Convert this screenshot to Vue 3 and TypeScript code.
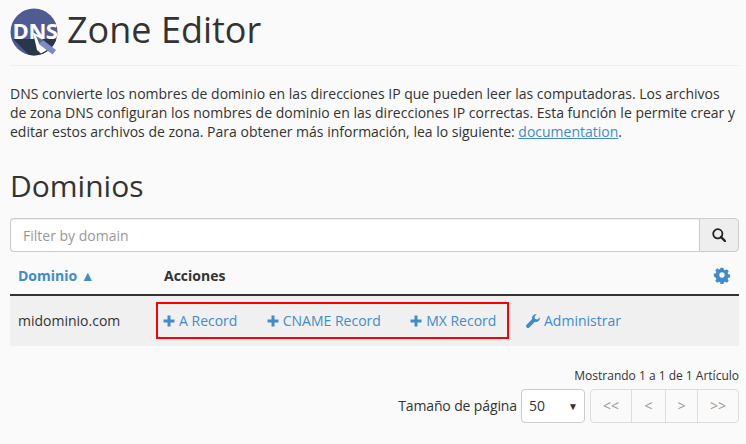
<script setup lang="ts">
const records: string[] = ['A Record', 'CNAME Record', 'MX Record']
const pager: string[] = ['<<', '<', '>', '>>']
</script>

<template>
  <main class="page">
    <header class="head">
      <svg class="logo" width="48" height="48" viewBox="0 0 48 48">
        <defs><clipPath id="c"><circle cx="24" cy="24" r="23.500" /></clipPath></defs>
        <circle cx="24" cy="24" r="23.500" fill="#4f5b93" />
        <g clip-path="url(#c)">
          <path d="M3 31 L46 31 L48 48 L20 48 Z" fill="#28384a" />
        </g>
        <text x="25" y="30.500" text-anchor="middle" class="logo-text">DNS</text>
        <path d="M23 24.500 L33 29.500 L31 36 L37 42 L31 45.500 L27 42 Z" fill="#fff" />
        <path d="M33 32 L46 42 L42.500 46.500 L29.500 36.500 Z" fill="#7f8ac4" />
        <path d="M26 28 L33 32 L29.500 36.500 Z" fill="#5a6a88" />
      </svg>
      <h1 class="title">Zone Editor</h1>
    </header>

    <p class="intro">
      DNS convierte los nombres de dominio en las direcciones IP que pueden leer las computadoras. Los archivos de zona DNS configuran los nombres de dominio en las direcciones IP correctas. Esta función le permite crear y editar estos archivos de zona. Para obtener más información, lea lo siguiente: <a class="doc" href="#">documentation</a>.
    </p>

    <h2 class="section">Dominios</h2>

    <div class="search">
      <input class="search-input" type="text" placeholder="Filter by domain" />
      <button class="search-btn" aria-label="Buscar">
        <svg class="search-icon" width="14" height="14" viewBox="0 0 14 14" fill="none" stroke="#222" stroke-width="1.800">
          <circle cx="5.800" cy="5.800" r="4.600" />
          <path d="M9 9 L13 13" stroke-width="2.400" stroke-linecap="round" />
        </svg>
      </button>
    </div>

    <div class="thead">
      <span class="th-domain">Dominio ▲</span>
      <span class="th-actions">Acciones</span>
      <svg class="gear" width="18" height="18" viewBox="0 0 18 18">
        <path fill="#428bca" fill-rule="evenodd" d="M7.300 0.500h3.400l.5 2.400 1.300.6 2.100-1.300 2.300 2.400-1.300 2 .6 1.400 2.300.5v3.300l-2.300.5-.6 1.400 1.300 2-2.300 2.400-2.100-1.300-1.300.6-.5 2.400H7.300l-.5-2.400-1.300-.6-2.100 1.300-2.300-2.400 1.300-2-.6-1.400L-.5 10.800V7.500l2.300-.5.6-1.400-1.300-2 2.300-2.400 2.100 1.300 1.300-.6z M9 5.900a3.100 3.100 0 1 0 0 6.200a3.100 3.100 0 1 0 0-6.200z" transform="translate(1.300 1.300) scale(.855)" />
      </svg>
    </div>

    <div class="row">
      <span class="domain">midominio.com</span>
      <div class="records">
        <a v-for="r in records" :key="r" class="link" href="#">
          <svg class="plus" width="12" height="12" viewBox="0 0 12 12"><path fill="#428bca" d="M4.500 0.500h3v4h4v3h-4v4h-3v-4h-4v-3h4z" /></svg>{{ r }}
        </a>
      </div>
      <a class="link manage" href="#">
        <svg class="wrench" width="14" height="14" viewBox="0 0 14 14"><path fill="#428bca" d="M13.700 3.200c.3 1.600-.1 3-1.200 3.900-1 .9-2.300 1.100-3.500.7L3.300 13.400c-.7.700-1.800.7-2.500 0l-.2-.2c-.7-.7-.7-1.800 0-2.500l5.600-5.700C5.800 3.800 6 2.400 7 1.400 7.900.4 9.300 0 10.800.3L8.600 2.500l.4 2.500 2.500.4z" /></svg>Administrar
      </a>
    </div>

    <div class="count">Mostrando 1 a 1 de 1 Artículo</div>
    <div class="paging">
      <span class="size-label">Tamaño de página</span>
      <div class="select"><span>50</span><span class="caret">▼</span></div>
      <div class="pager">
        <span v-for="p in pager" :key="p" class="page-btn">{{ p }}</span>
      </div>
    </div>
  </main>
</template>

<style>
html, body { margin: 0; background: #fafafa; }
</style>

<style scoped>
.page {
  box-sizing: border-box;
  width: 746px;
  height: 444px;
  overflow: hidden;
  padding: 0 7px 0 10px;
  font-family: "Open Sans", sans-serif;
  font-size: 14px;
  line-height: 20px;
  color: #333;
}
.head {
  display: flex;
  align-items: center;
  gap: 9px;
  border-bottom: 1px solid #eee;
  padding-bottom: 5px;
  height: 60px;
}
.logo { flex: none; margin-top: 4px; }
.logo-text { font: 700 22px "Open Sans", sans-serif; fill: #fff; letter-spacing: -0.5px; }
.title { margin: 0; font-size: 36px; font-weight: 400; line-height: 50px; }
.intro { margin: 18px 0 0; width: 729px; line-height: 19px; }
.doc { color: #428bca; text-decoration: underline; }
.section { margin: 24px 0 0; font-size: 30px; font-weight: 400; line-height: 42px; }
.search { display: flex; height: 34px; margin-top: 11px; }
.search-input {
  flex: 1;
  min-width: 0;
  box-sizing: border-box;
  height: 34px;
  padding: 6px 12px;
  border: 1px solid #ccc;
  border-right: 0;
  border-radius: 4px 0 0 4px;
  background: #fff;
  font: 14px "Open Sans", sans-serif;
  color: #333;
  box-shadow: inset 0 1px 1px rgba(0,0,0,.075);
  outline: none;
}
.search-input::placeholder { color: #999; opacity: 1; }
.search-btn {
  width: 40px;
  height: 34px;
  padding: 0;
  display: flex;
  align-items: center;
  justify-content: center;
  border: 1px solid #ccc;
  border-radius: 0 4px 4px 0;
  background: #eee;
}
.search-icon { margin-bottom: 1px; }
.thead {
  display: flex;
  align-items: center;
  height: 36px;
  padding-top: 6px;
  border-bottom: 2px solid #333;
  font-weight: 700;
}
.th-domain { box-sizing: border-box; width: 154px; padding-left: 8px; color: #428bca; }
.th-actions { flex: 1; }
.gear { margin: 0 8px 2px 0; }
.row {
  display: flex;
  align-items: center;
  height: 50px;
  background: #f0f0f0;
}
.domain { box-sizing: border-box; width: 146px; padding-left: 8px; }
.records {
  box-sizing: border-box;
  display: flex;
  align-items: center;
  width: 353px;
  height: 37px;
  border: 2px solid #f00;
  padding-left: 5px;
  gap: 29.300px;
  margin-top: -1px;
}
.link { color: #428bca; text-decoration: none; white-space: nowrap; display: inline-flex; align-items: center; }
.plus { margin-right: 4px; }
.manage { margin-left: 17px; }
.wrench { margin-right: 4px; }
.count { margin-top: 20px; text-align: right; font-size: 12px; line-height: 20px; }
.paging { display: flex; justify-content: flex-end; align-items: center; margin-top: 3px; }
.size-label { margin-right: 4px; letter-spacing: -0.120px; }
.select {
  box-sizing: border-box;
  display: flex;
  justify-content: space-between;
  align-items: center;
  width: 64px;
  height: 34px;
  padding: 0 6px 0 7px;
  border: 1px solid #ccc;
  border-radius: 4px;
  background: #fff;
}
.caret { font-size: 10px; color: #333; }
.pager { display: flex; margin-left: 5px; height: 34px; border: 1px solid #ddd; border-radius: 4px; box-sizing: border-box; }
.page-btn {
  display: flex;
  align-items: center;
  justify-content: center;
  color: #999;
  border-left: 1px solid #ddd;
  width: 33px;
}
.page-btn:first-child { border-left: 0; width: 40px; }
.page-btn:nth-child(3) { width: 31px; }
.page-btn:last-child { width: 40px; }
</style>
